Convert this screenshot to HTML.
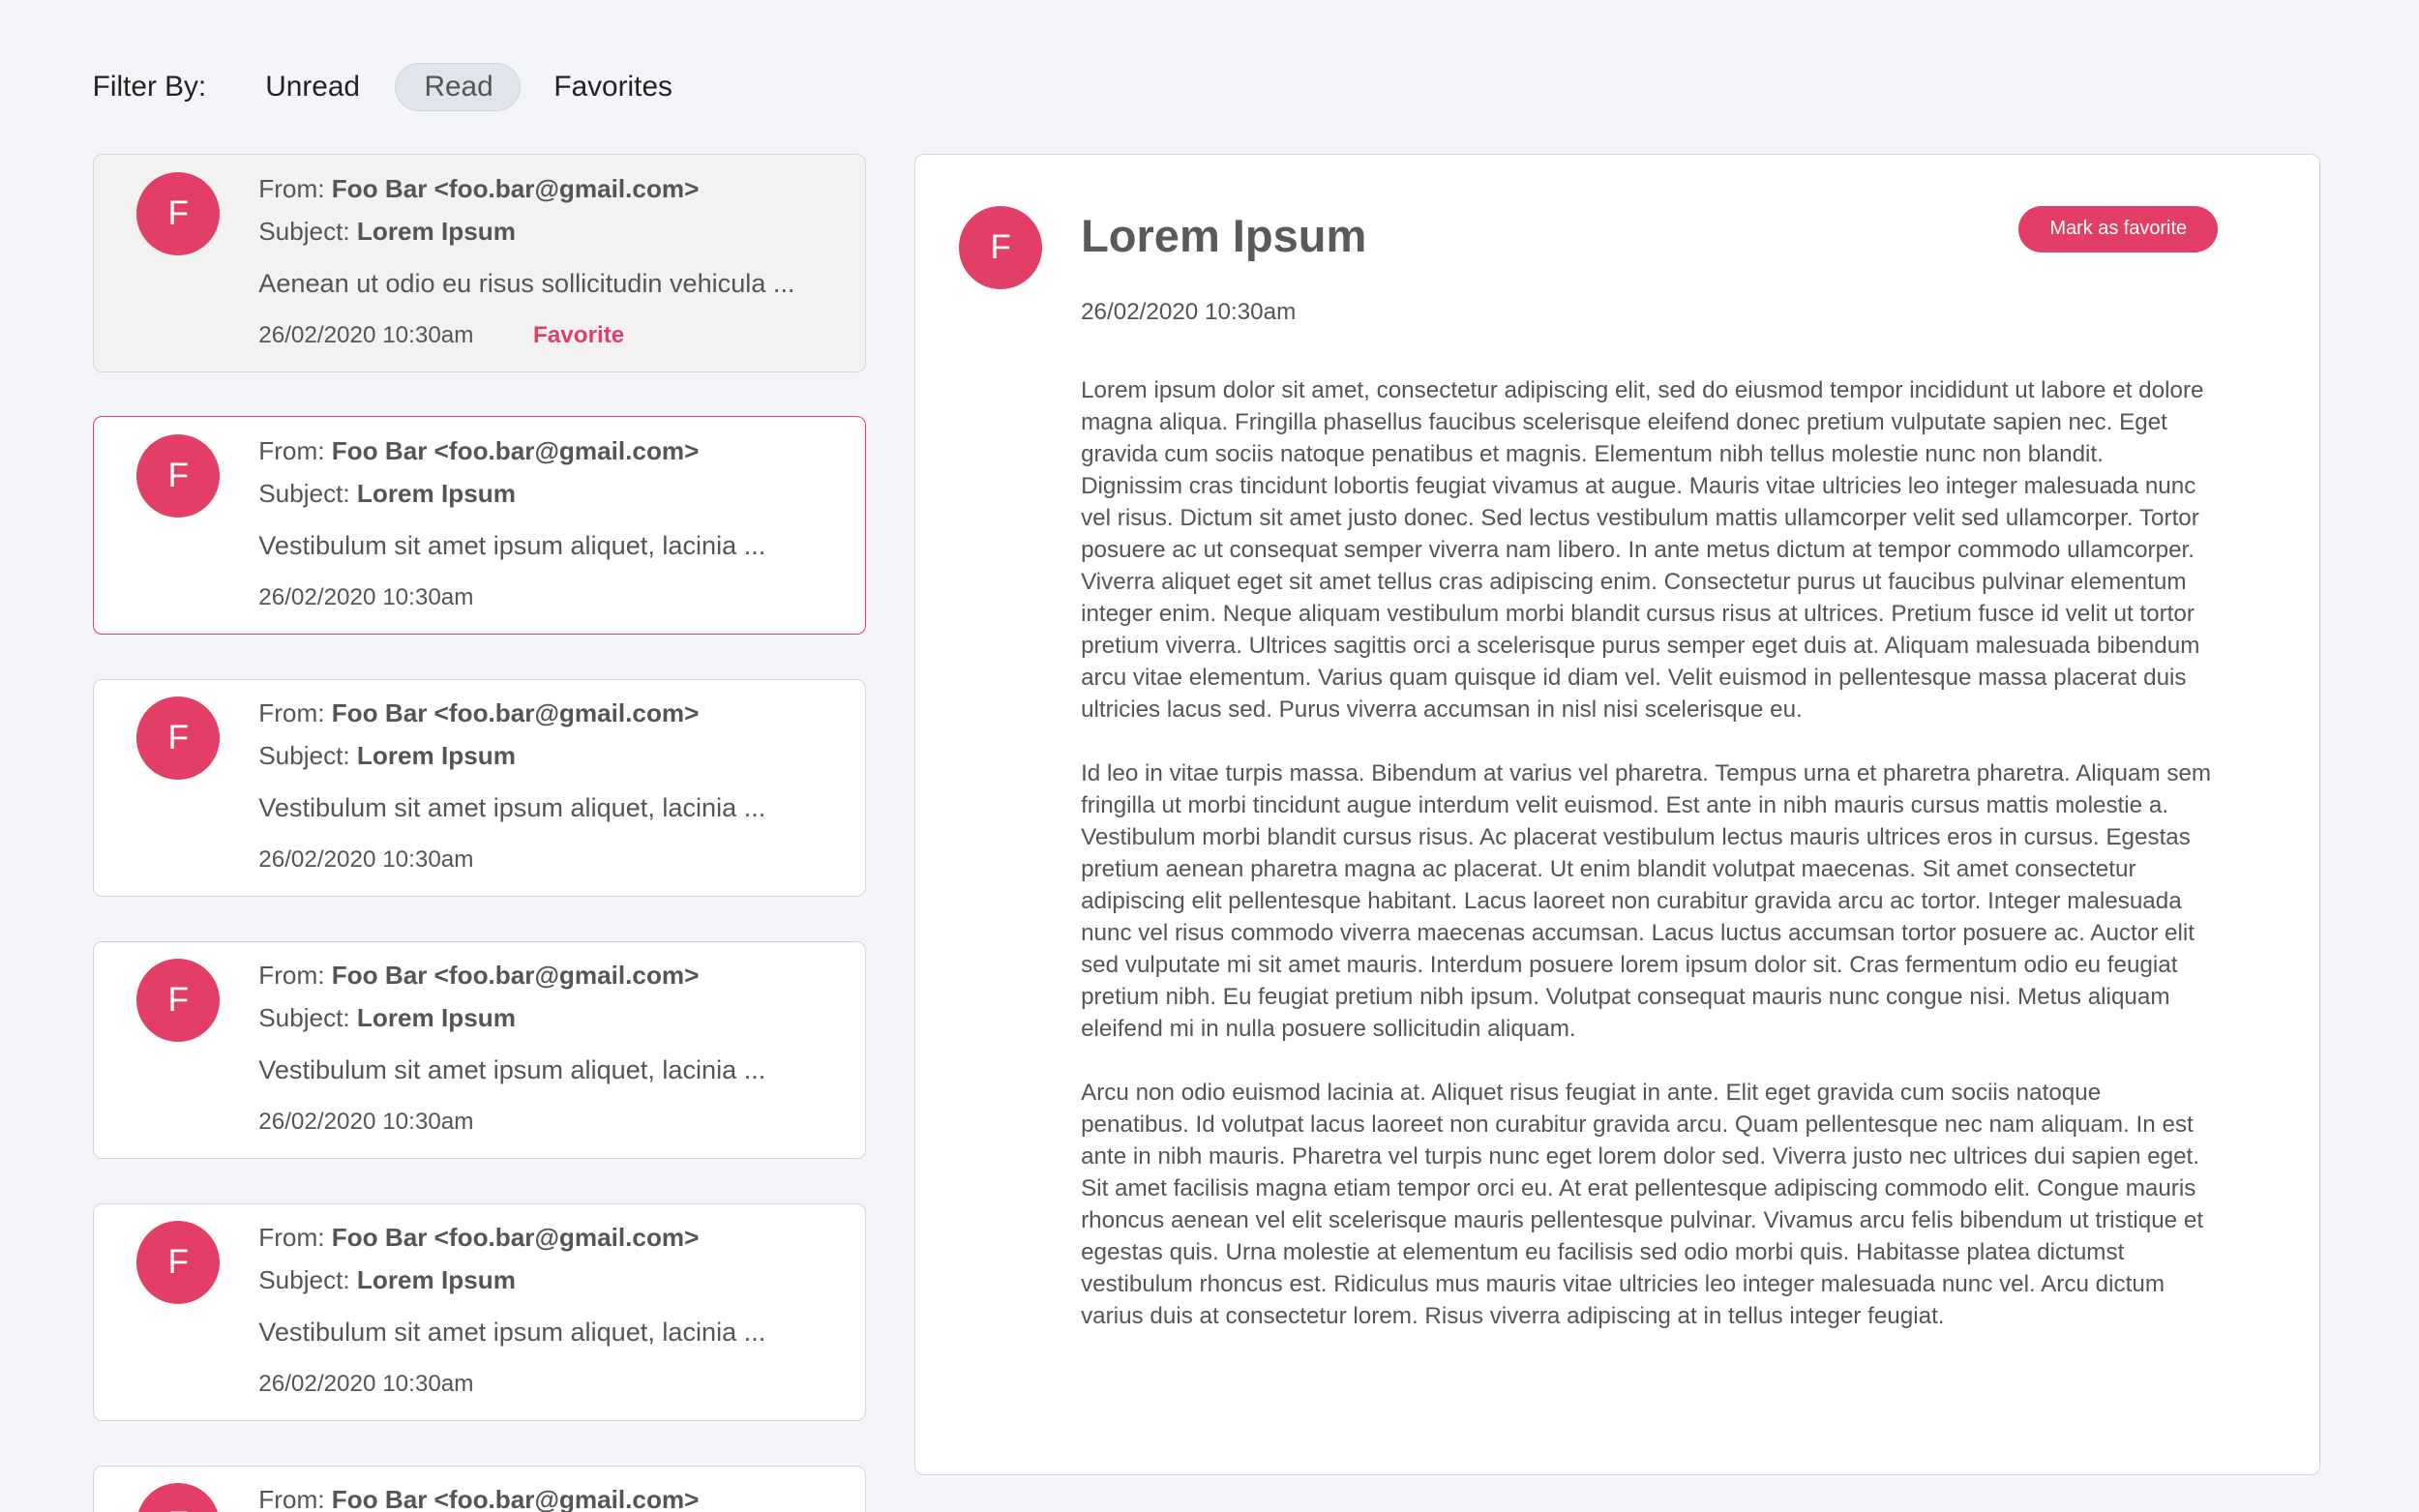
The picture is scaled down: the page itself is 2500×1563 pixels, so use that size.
<!DOCTYPE html>
<html><head><meta charset="utf-8"><style>
html,body{margin:0;padding:0;background:#f4f5f8;overflow:hidden;width:2500px;height:1563px}
#w{zoom:1.59439;width:1568px;height:980px;position:relative;overflow:hidden;font-family:"Liberation Sans",sans-serif;color:#555}
.a{position:absolute;white-space:nowrap}
.f{font-size:18.7px;color:#222;top:46px}
.pill{position:absolute;left:256px;top:41px;width:80px;height:30px;border:1px solid #cfd3dc;background:#e1e4eb;border-radius:16px}
.card{position:absolute;left:60px;width:500px;height:140px;border:1px solid #d3d6df;border-radius:6px;background:#fff;overflow:hidden}
.av{position:absolute;width:54px;height:54px;border-radius:50%;background:#e33e65;color:#fff;font-size:22px;text-align:center;line-height:54px}
.card .av{left:28px;top:11px}
.card .t{position:absolute;left:107px;white-space:nowrap;color:#555}
.fr{top:12px;font-size:16.4px}.sb{top:40px;font-size:16.4px}.pv{top:73px;font-size:17px}.dt{top:108px;font-size:15.2px}
b{font-weight:bold;color:#555}
.panel{position:absolute;left:593px;top:100px;width:910px;height:855px;border:1px solid #d3d6df;border-radius:6px;background:#fff}
.bd{position:absolute;left:107px;font-size:15.2px;line-height:20.7px;color:#555}
.bd div{white-space:nowrap}
</style></head><body><div id="w">
<div class="a f" style="left:60px">Filter By:</div>
<div class="pill"></div>
<div class="a f" style="left:172px">Unread</div>
<div class="a f" style="left:275px;color:#555">Read</div>
<div class="a f" style="left:359px">Favorites</div>

<div class="card" style="top:100px;background:#f2f2f2">
<div class="av">F</div>
<div class="t fr">From: <b>Foo Bar &lt;foo.bar@gmail.com&gt;</b></div>
<div class="t sb">Subject: <b>Lorem Ipsum</b></div>
<div class="t pv">Aenean ut odio eu risus sollicitudin vehicula ...</div>
<div class="t dt">26/02/2020 10:30am</div>
<div class="t dt" style="left:285px;color:#e33e65;font-weight:bold">Favorite</div>
</div>
<div class="card" style="top:270px;border-color:#e03d67">
<div class="av">F</div>
<div class="t fr">From: <b>Foo Bar &lt;foo.bar@gmail.com&gt;</b></div>
<div class="t sb">Subject: <b>Lorem Ipsum</b></div>
<div class="t pv">Vestibulum sit amet ipsum aliquet, lacinia ...</div>
<div class="t dt">26/02/2020 10:30am</div>
</div>
<div class="card" style="top:440px">
<div class="av">F</div>
<div class="t fr">From: <b>Foo Bar &lt;foo.bar@gmail.com&gt;</b></div>
<div class="t sb">Subject: <b>Lorem Ipsum</b></div>
<div class="t pv">Vestibulum sit amet ipsum aliquet, lacinia ...</div>
<div class="t dt">26/02/2020 10:30am</div>
</div>
<div class="card" style="top:610px">
<div class="av">F</div>
<div class="t fr">From: <b>Foo Bar &lt;foo.bar@gmail.com&gt;</b></div>
<div class="t sb">Subject: <b>Lorem Ipsum</b></div>
<div class="t pv">Vestibulum sit amet ipsum aliquet, lacinia ...</div>
<div class="t dt">26/02/2020 10:30am</div>
</div>
<div class="card" style="top:780px">
<div class="av">F</div>
<div class="t fr">From: <b>Foo Bar &lt;foo.bar@gmail.com&gt;</b></div>
<div class="t sb">Subject: <b>Lorem Ipsum</b></div>
<div class="t pv">Vestibulum sit amet ipsum aliquet, lacinia ...</div>
<div class="t dt">26/02/2020 10:30am</div>
</div>
<div class="card" style="top:950px">
<div class="av">F</div>
<div class="t fr">From: <b>Foo Bar &lt;foo.bar@gmail.com&gt;</b></div>
</div>

<div class="panel">
<div class="av" style="left:28px;top:33px">F</div>
<div class="a" style="left:107px;top:35px;font-size:29.5px;font-weight:bold;color:#5a5a5a">Lorem Ipsum</div>
<div class="a" style="left:715px;top:33px;width:129px;height:30px;border-radius:15px;background:#e33e65;color:#fff;font-size:12.5px;text-align:center;line-height:30px">Mark as favorite</div>
<div class="a" style="left:107px;top:93px;font-size:15.2px">26/02/2020 10:30am</div>
<div class="bd" style="top:142px">
<div>Lorem ipsum dolor sit amet, consectetur adipiscing elit, sed do eiusmod tempor incididunt ut labore et dolore</div>
<div>magna aliqua. Fringilla phasellus faucibus scelerisque eleifend donec pretium vulputate sapien nec. Eget</div>
<div>gravida cum sociis natoque penatibus et magnis. Elementum nibh tellus molestie nunc non blandit.</div>
<div>Dignissim cras tincidunt lobortis feugiat vivamus at augue. Mauris vitae ultricies leo integer malesuada nunc</div>
<div>vel risus. Dictum sit amet justo donec. Sed lectus vestibulum mattis ullamcorper velit sed ullamcorper. Tortor</div>
<div>posuere ac ut consequat semper viverra nam libero. In ante metus dictum at tempor commodo ullamcorper.</div>
<div>Viverra aliquet eget sit amet tellus cras adipiscing enim. Consectetur purus ut faucibus pulvinar elementum</div>
<div>integer enim. Neque aliquam vestibulum morbi blandit cursus risus at ultrices. Pretium fusce id velit ut tortor</div>
<div>pretium viverra. Ultrices sagittis orci a scelerisque purus semper eget duis at. Aliquam malesuada bibendum</div>
<div>arcu vitae elementum. Varius quam quisque id diam vel. Velit euismod in pellentesque massa placerat duis</div>
<div>ultricies lacus sed. Purus viverra accumsan in nisl nisi scelerisque eu.</div>
<div>&nbsp;</div>
<div>Id leo in vitae turpis massa. Bibendum at varius vel pharetra. Tempus urna et pharetra pharetra. Aliquam sem</div>
<div>fringilla ut morbi tincidunt augue interdum velit euismod. Est ante in nibh mauris cursus mattis molestie a.</div>
<div>Vestibulum morbi blandit cursus risus. Ac placerat vestibulum lectus mauris ultrices eros in cursus. Egestas</div>
<div>pretium aenean pharetra magna ac placerat. Ut enim blandit volutpat maecenas. Sit amet consectetur</div>
<div>adipiscing elit pellentesque habitant. Lacus laoreet non curabitur gravida arcu ac tortor. Integer malesuada</div>
<div>nunc vel risus commodo viverra maecenas accumsan. Lacus luctus accumsan tortor posuere ac. Auctor elit</div>
<div>sed vulputate mi sit amet mauris. Interdum posuere lorem ipsum dolor sit. Cras fermentum odio eu feugiat</div>
<div>pretium nibh. Eu feugiat pretium nibh ipsum. Volutpat consequat mauris nunc congue nisi. Metus aliquam</div>
<div>eleifend mi in nulla posuere sollicitudin aliquam.</div>
<div>&nbsp;</div>
<div>Arcu non odio euismod lacinia at. Aliquet risus feugiat in ante. Elit eget gravida cum sociis natoque</div>
<div>penatibus. Id volutpat lacus laoreet non curabitur gravida arcu. Quam pellentesque nec nam aliquam. In est</div>
<div>ante in nibh mauris. Pharetra vel turpis nunc eget lorem dolor sed. Viverra justo nec ultrices dui sapien eget.</div>
<div>Sit amet facilisis magna etiam tempor orci eu. At erat pellentesque adipiscing commodo elit. Congue mauris</div>
<div>rhoncus aenean vel elit scelerisque mauris pellentesque pulvinar. Vivamus arcu felis bibendum ut tristique et</div>
<div>egestas quis. Urna molestie at elementum eu facilisis sed odio morbi quis. Habitasse platea dictumst</div>
<div>vestibulum rhoncus est. Ridiculus mus mauris vitae ultricies leo integer malesuada nunc vel. Arcu dictum</div>
<div>varius duis at consectetur lorem. Risus viverra adipiscing at in tellus integer feugiat.</div>
</div>
</div>
</div></body></html>
